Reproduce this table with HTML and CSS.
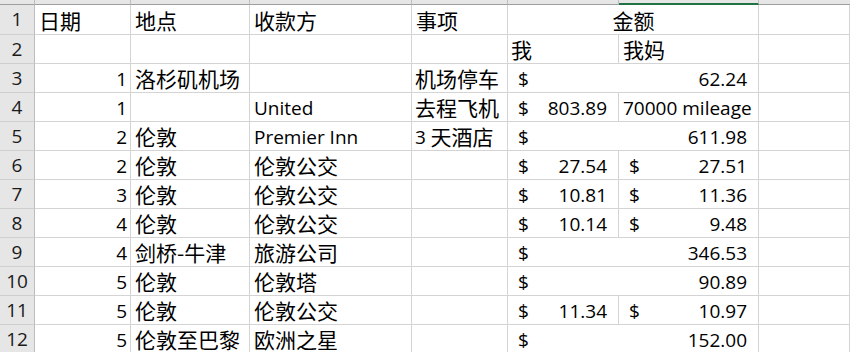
FILE: index.html
```html
<!DOCTYPE html>
<html lang="zh">
<head>
<meta charset="utf-8">
<title>Sheet</title>
<link rel="stylesheet" href="styles.css">
</head>
<body>
<div class="sheet">
  <div class="h corner"></div>
  <div class="h"></div>
  <div class="h"></div>
  <div class="h"></div>
  <div class="h"></div>
  <div class="h"></div>
  <div class="h sel"></div>
  <div class="h last"></div>

  <div class="rh">1</div>
  <div class="c cjk">日期</div>
  <div class="c cjk">地点</div>
  <div class="c cjk">收款方</div>
  <div class="c cjk">事项</div>
  <div class="c cjk span2 center">金额</div>
  <div class="c"></div>

  <div class="rh">2</div>
  <div class="c"></div>
  <div class="c"></div>
  <div class="c"></div>
  <div class="c"></div>
  <div class="c cjk tight">我</div>
  <div class="c cjk">我妈</div>
  <div class="c"></div>

  <div class="rh">3</div>
  <div class="c num">1</div>
  <div class="c cjk">洛杉矶机场</div>
  <div class="c"></div>
  <div class="c cjk tight">机场停车</div>
  <div class="c acct span2"><span>$</span><span>62.24</span></div>
  <div class="c"></div>

  <div class="rh">4</div>
  <div class="c num">1</div>
  <div class="c"></div>
  <div class="c">United</div>
  <div class="c cjk tight">去程飞机</div>
  <div class="c acct"><span>$</span><span>803.89</span></div>
  <div class="c">70000 mileage</div>
  <div class="c"></div>

  <div class="rh">5</div>
  <div class="c num">2</div>
  <div class="c cjk">伦敦</div>
  <div class="c">Premier Inn</div>
  <div class="c tight"><span class="lat">3</span><span class="cjk-in">&nbsp;天酒店</span></div>
  <div class="c acct span2"><span>$</span><span>611.98</span></div>
  <div class="c"></div>

  <div class="rh">6</div>
  <div class="c num">2</div>
  <div class="c cjk">伦敦</div>
  <div class="c cjk">伦敦公交</div>
  <div class="c"></div>
  <div class="c acct"><span>$</span><span>27.54</span></div>
  <div class="c acct"><span>$</span><span>27.51</span></div>
  <div class="c"></div>

  <div class="rh">7</div>
  <div class="c num">3</div>
  <div class="c cjk">伦敦</div>
  <div class="c cjk">伦敦公交</div>
  <div class="c"></div>
  <div class="c acct"><span>$</span><span>10.81</span></div>
  <div class="c acct"><span>$</span><span>11.36</span></div>
  <div class="c"></div>

  <div class="rh">8</div>
  <div class="c num">4</div>
  <div class="c cjk">伦敦</div>
  <div class="c cjk">伦敦公交</div>
  <div class="c"></div>
  <div class="c acct"><span>$</span><span>10.14</span></div>
  <div class="c acct"><span>$</span><span>9.48</span></div>
  <div class="c"></div>

  <div class="rh">9</div>
  <div class="c num">4</div>
  <div class="c cjk">剑桥-牛津</div>
  <div class="c cjk">旅游公司</div>
  <div class="c"></div>
  <div class="c acct span2"><span>$</span><span>346.53</span></div>
  <div class="c"></div>

  <div class="rh">10</div>
  <div class="c num">5</div>
  <div class="c cjk">伦敦</div>
  <div class="c cjk">伦敦塔</div>
  <div class="c"></div>
  <div class="c acct span2"><span>$</span><span>90.89</span></div>
  <div class="c"></div>

  <div class="rh">11</div>
  <div class="c num">5</div>
  <div class="c cjk">伦敦</div>
  <div class="c cjk">伦敦公交</div>
  <div class="c"></div>
  <div class="c acct"><span>$</span><span>11.34</span></div>
  <div class="c acct"><span>$</span><span>10.97</span></div>
  <div class="c"></div>

  <div class="rh">12</div>
  <div class="c num">5</div>
  <div class="c cjk">伦敦至巴黎</div>
  <div class="c cjk">欧洲之星</div>
  <div class="c"></div>
  <div class="c acct span2"><span>$</span><span>152.00</span></div>
  <div class="c"></div>
</div>
</body>
</html>
```
FILE: styles.css
```css
html, body {
  margin: 0;
  padding: 0;
  background: #ffffff;
}

body {
  width: 850px;
  height: 352px;
  overflow: hidden;
  font-family: "Open Sans", "Liberation Sans", "Noto Sans CJK SC", sans-serif;
  font-size: 19px;
  color: #000;
}

.sheet {
  display: grid;
  grid-template-columns: 35px 96px 119px 162px 96px 111px 140px 1fr;
  grid-template-rows: 5px 30px repeat(11, 29px);
}

.h {
  box-sizing: border-box;
  background: #e6e6e6;
  border-right: 1px solid #bfbfbf;
  border-bottom: 1px solid #9e9e9e;
}

.h.sel {
  border-bottom: 2px solid #217346;
}

.h.last {
  border-right: none;
}

.rh {
  box-sizing: border-box;
  background: #e6e6e6;
  border-right: 1px solid #bdbdbd;
  border-bottom: 1px solid #cfcfcf;
  display: flex;
  align-items: center;
  justify-content: center;
  line-height: 19px;
  color: #1a1a1a;
}

.c {
  box-sizing: border-box;
  border-right: 1px solid #d4d4d4;
  border-bottom: 1px solid #d4d4d4;
  display: flex;
  align-items: flex-end;
  padding: 0 3px 3px 4px;
  white-space: nowrap;
  line-height: 19px;
  min-width: 0;
}

.cjk, .cjk-in {
  font-family: "Noto Sans CJK SC", sans-serif;
  font-size: 21px;
  line-height: 21px;
}

.tight {
  padding-left: 3px;
}

.num {
  justify-content: flex-end;
}

.center {
  justify-content: center;
}

.span2 {
  grid-column: span 2;
}

.acct {
  justify-content: space-between;
  padding-left: 10px;
  padding-right: 11px;
}
```
